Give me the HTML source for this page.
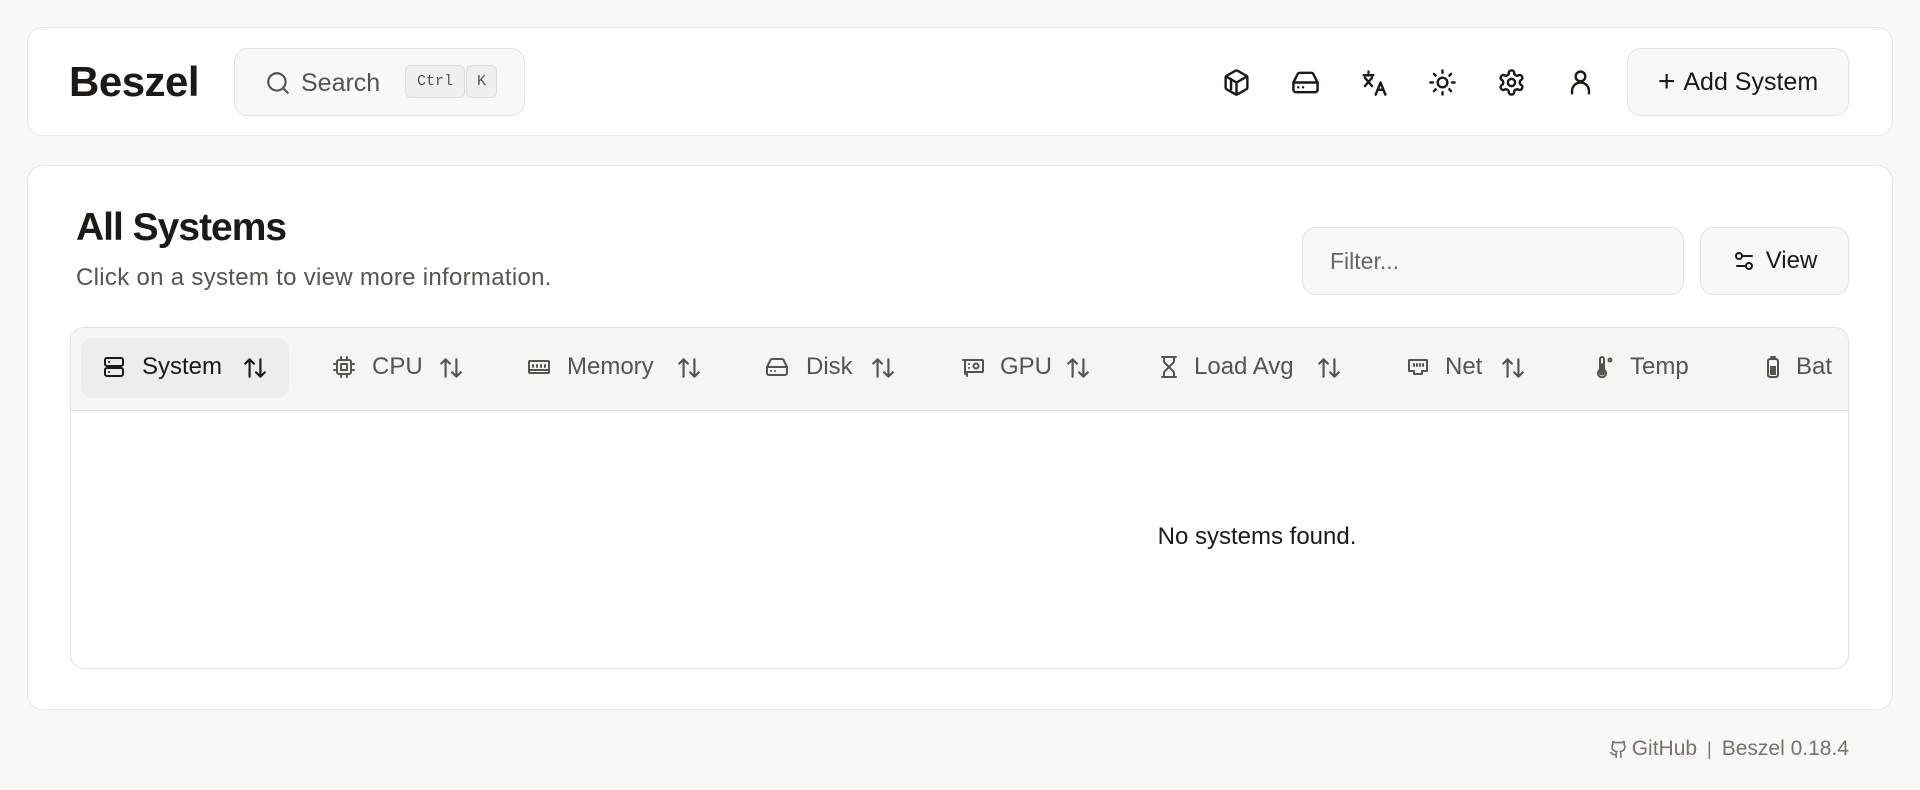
<!DOCTYPE html>
<html><head><meta charset="utf-8"><style>
*{box-sizing:border-box;margin:0;padding:0}
body{width:1920px;height:790px;background:#f8f8f7;font-family:"Liberation Sans",sans-serif;color:#1c1917;position:relative;overflow:hidden}
.card{position:absolute;background:#fff;border:1px solid #e9e7e5;border-radius:16px}
.abs{position:absolute}
svg.i{fill:none;stroke:currentColor;stroke-width:2;stroke-linecap:round;stroke-linejoin:round}
.btn{position:absolute;border:1px solid #e4e2df;background:#f8f8f7;border-radius:14px;display:flex;align-items:center;justify-content:center}
.th{position:absolute;top:367px;transform:translateY(-50%);display:flex;align-items:center;font-size:24px;color:#57534e}
.th svg{width:24px;height:24px}
</style></head><body>
<div class="card" style="left:27px;top:27px;width:1866px;height:109px"></div>
<div class="abs" style="left:69px;top:60px;font-size:42px;font-weight:bold;letter-spacing:-0.5px;line-height:44px">Beszel</div>
<div class="btn" style="left:234px;top:48px;width:291px;height:68px;justify-content:flex-start">
 <svg class="i" style="position:absolute;left:30px;top:21px;width:26px;height:26px;color:#57534e" viewBox="0 0 24 24"><circle cx="11" cy="11" r="8"/><path d="m21 21-4.3-4.3"/></svg>
 <span style="position:absolute;left:66px;top:20px;font-size:25px;color:#57534e">Search</span>
 <span style="position:absolute;left:170px;top:16px;width:60px;height:33px;border:1px solid #e0ddda;background:#f1f0ee;border-radius:6px;font-family:'Liberation Mono',monospace;font-size:15px;color:#57534e;display:flex;align-items:center;justify-content:center">Ctrl</span>
 <span style="position:absolute;left:231px;top:16px;width:31px;height:33px;border:1px solid #e0ddda;background:#f1f0ee;border-radius:6px;font-family:'Liberation Mono',monospace;font-size:15px;color:#57534e;display:flex;align-items:center;justify-content:center">K</span>
</div>
<!-- header icons -->
<svg class="i abs" style="left:1222px;top:68px;width:29px;height:29px" viewBox="0 0 24 24"><path d="M21 8a2 2 0 0 0-1-1.7l-7-4a2 2 0 0 0-2 0l-7 4A2 2 0 0 0 3 8v8a2 2 0 0 0 1 1.7l7 4a2 2 0 0 0 2 0l7-4a2 2 0 0 0 1-1.7Z"/><path d="m3.3 7 8.7 5 8.7-5"/><path d="M12 22V12"/><path d="M7.5 9.5v8"/></svg>
<svg class="i abs" style="left:1291px;top:68px;width:29px;height:29px" viewBox="0 0 24 24"><path d="M22 12H2"/><path d="M5.45 5.11 2 12v6a2 2 0 0 0 2 2h16a2 2 0 0 0 2-2v-6l-3.45-6.89A2 2 0 0 0 16.76 4H7.24a2 2 0 0 0-1.79 1.11z"/><path d="M6 16h.01M10 16h.01"/></svg>
<svg class="i abs" style="left:1360px;top:68px;width:29px;height:29px" viewBox="0 0 24 24"><path d="M7 3v1M3 6h8M4 8l6 7M10 8l-6 7"/><path d="M13 22l4-10 4 10M14.5 18h5"/></svg>
<svg class="i abs" style="left:1428px;top:68px;width:29px;height:29px" viewBox="0 0 24 24"><circle cx="12" cy="12" r="4"/><path d="M12 2v2M12 20v2M4.93 4.93l1.41 1.41M17.66 17.66l1.41 1.41M2 12h2M20 12h2M6.34 17.66l-1.41 1.41M19.07 4.93l-1.41 1.41"/></svg>
<svg class="i abs" style="left:1497px;top:68px;width:29px;height:29px" viewBox="0 0 24 24"><path d="M12.22 2h-.44a2 2 0 0 0-2 2v.18a2 2 0 0 1-1 1.73l-.43.25a2 2 0 0 1-2 0l-.15-.08a2 2 0 0 0-2.73.73l-.22.38a2 2 0 0 0 .73 2.730l.15.1a2 2 0 0 1 1 1.72v.51a2 2 0 0 1-1 1.74l-.15.09a2 2 0 0 0-.73 2.73l.22.38a2 2 0 0 0 2.73.73l.15-.08a2 2 0 0 1 2 0l.43.25a2 2 0 0 1 1 1.73V20a2 2 0 0 0 2 2h.44a2 2 0 0 0 2-2v-.18a2 2 0 0 1 1-1.73l.43-.25a2 2 0 0 1 2 0l.15.08a2 2 0 0 0 2.73-.73l.22-.39a2 2 0 0 0-.73-2.73l-.15-.08a2 2 0 0 1-1-1.74v-.5a2 2 0 0 1 1-1.74l.15-.09a2 2 0 0 0 .73-2.73l-.22-.38a2 2 0 0 0-2.73-.73l-.15.08a2 2 0 0 1-2 0l-.43-.25a2 2 0 0 1-1-1.73V4a2 2 0 0 0-2-2z"/><circle cx="12" cy="12" r="3"/></svg>
<svg class="i abs" style="left:1566px;top:68px;width:29px;height:29px" viewBox="0 0 24 24"><circle cx="12" cy="7" r="4"/><path d="M5 21v-2a6 6 0 0 1 14 0v2"/></svg>
<div class="btn" style="left:1627px;top:48px;width:222px;height:68px;font-size:25px;color:#1c1917"><span style="font-size:30px;margin-right:8px;line-height:1">+</span>Add System</div>

<div class="card" style="left:27px;top:165px;width:1866px;height:545px"></div>
<div class="abs" style="left:76px;top:206px;font-size:39px;font-weight:bold;letter-spacing:-1px">All Systems</div>
<div class="abs" style="left:76px;top:264px;font-size:24px;letter-spacing:0.3px;color:#57534e">Click on a system to view more information.</div>
<div class="btn" style="left:1302px;top:227px;width:382px;height:68px;justify-content:flex-start;padding-left:27px;font-size:23px;color:#6b6561">Filter...</div>
<div class="btn" style="left:1700px;top:227px;width:149px;height:68px;font-size:24px;color:#1c1917">
 <svg class="i" style="width:24px;height:24px;margin-right:10px" viewBox="0 0 24 24"><path d="M20 7h-9M14 17H5"/><circle cx="17" cy="17" r="3"/><circle cx="7" cy="7" r="3"/></svg>View</div>

<div class="abs" style="left:70px;top:327px;width:1779px;height:342px;border:1px solid #e4e2df;border-radius:14px;overflow:hidden;background:#fff">
 <div style="height:83px;background:#f5f5f4;border-bottom:1px solid #e4e2df"></div>
</div>
<div class="abs" style="left:81px;top:338px;width:208px;height:60px;background:#efecea;border-radius:12px"></div>
<div class="th" style="left:102px;color:#1c1917"><svg class="i" viewBox="0 0 24 24"><rect x="3" y="3" width="18" height="8" rx="2"/><rect x="3" y="13" width="18" height="8" rx="2"/><path d="M7 7h.01M7 17h.01"/></svg><span style="margin-left:16px">System</span></div>
<div class="th" style="left:332px"><svg class="i" viewBox="0 0 24 24"><rect x="5" y="5" width="14" height="14" rx="2"/><rect x="9" y="9" width="6" height="6"/><path d="M9 2v3M15 2v3M9 19v3M15 19v3M2 9h3M2 15h3M19 9h3M19 15h3"/></svg><span style="margin-left:16px">CPU</span></div>
<div class="th" style="left:527px"><svg class="i" viewBox="0 0 24 24"><rect x="2" y="6" width="20" height="12" rx="1"/><path d="M6 10v2M10 10v2M14 10v2M18 10v2M2 15h20"/></svg><span style="margin-left:16px">Memory</span></div>
<div class="th" style="left:765px"><svg class="i" viewBox="0 0 24 24"><path d="M22 12H2"/><path d="M5.45 5.11 2 12v6a2 2 0 0 0 2 2h16a2 2 0 0 0 2-2v-6l-3.45-6.89A2 2 0 0 0 16.760 4H7.24a2 2 0 0 0-1.79 1.11z"/><path d="M6 16h.01M10 16h.01"/></svg><span style="margin-left:17px">Disk</span></div>
<div class="th" style="left:961px"><svg class="i" viewBox="0 0 24 24"><path d="M2 5h2v14"/><rect x="4" y="5" width="18" height="12" rx="1"/><circle cx="15" cy="11" r="2.5"/><path d="M8 9h.01M8 13h.01M6 21v-4"/></svg><span style="margin-left:15px">GPU</span></div>
<div class="th" style="left:1157px"><svg class="i" viewBox="0 0 24 24"><path d="M5 22h14M5 2h14M17 22v-4.17a2 2 0 0 0-.59-1.42L12 12l-4.41 4.41A2 2 0 0 0 7 17.83V22M7 2v4.17a2 2 0 0 0 .59 1.42L12 12l4.41-4.41A2 2 0 0 0 17 6.17V2"/></svg><span style="margin-left:13px">Load Avg</span></div>
<div class="th" style="left:1406px"><svg class="i" viewBox="0 0 24 24"><path d="M3 5h18v11h-5v3H8v-3H3z"/><path d="M8 9v2M11 9v2M14 9v2M17 9v2"/></svg><span style="margin-left:15px">Net</span></div>
<div class="th" style="left:1593px"><svg class="i" viewBox="0 0 24 24"><path d="M11 14.76V4a2 2 0 0 0-4 0v10.76a4 4 0 1 0 4 0Z"/><circle cx="9" cy="17.5" r="2" fill="#57534e"/><path d="M9 17V9"/><circle cx="17" cy="5" r="1.5"/></svg><span style="margin-left:13px">Temp</span></div>
<div class="th" style="left:1761px"><svg class="i" viewBox="0 0 24 24"><rect x="7" y="4" width="10" height="18" rx="2"/><path d="M10 2h4"/><rect x="9" y="11" width="6" height="9" fill="#57534e" stroke="none"/></svg><span style="margin-left:11px">Bat</span></div>
<!-- sort arrows -->
<svg class="i abs" style="left:242px;top:355px;width:26px;height:26px;color:#1c1917" viewBox="0 0 24 24"><path d="M7 20V4M3 8l4-4 4 4M17 4v16M13 16l4 4 4-4"/></svg>
<svg class="i abs" style="left:438px;top:355px;width:26px;height:26px;color:#57534e" viewBox="0 0 24 24"><path d="M7 20V4M3 8l4-4 4 4M17 4v16M13 16l4 4 4-4"/></svg>
<svg class="i abs" style="left:676px;top:355px;width:26px;height:26px;color:#57534e" viewBox="0 0 24 24"><path d="M7 20V4M3 8l4-4 4 4M17 4v16M13 16l4 4 4-4"/></svg>
<svg class="i abs" style="left:870px;top:355px;width:26px;height:26px;color:#57534e" viewBox="0 0 24 24"><path d="M7 20V4M3 8l4-4 4 4M17 4v16M13 16l4 4 4-4"/></svg>
<svg class="i abs" style="left:1065px;top:355px;width:26px;height:26px;color:#57534e" viewBox="0 0 24 24"><path d="M7 20V4M3 8l4-4 4 4M17 4v16M13 16l4 4 4-4"/></svg>
<svg class="i abs" style="left:1316px;top:355px;width:26px;height:26px;color:#57534e" viewBox="0 0 24 24"><path d="M7 20V4M3 8l4-4 4 4M17 4v16M13 16l4 4 4-4"/></svg>
<svg class="i abs" style="left:1500px;top:355px;width:26px;height:26px;color:#57534e" viewBox="0 0 24 24"><path d="M7 20V4M3 8l4-4 4 4M17 4v16M13 16l4 4 4-4"/></svg>

<div class="abs" style="left:1057px;top:523px;width:400px;text-align:center;font-size:24px;color:#1c1917">No systems found.</div>

<div class="abs" style="right:71px;top:737px;display:flex;align-items:center;font-size:21px;color:#78716c">
 <svg class="i" style="width:19px;height:19px;margin-right:4px" viewBox="0 0 24 24"><path d="M15 22v-4a4.8 4.8 0 0 0-1-3.5c3 0 6-2 6-5.5.08-1.25-.27-2.48-1-3.5.28-1.15.28-2.35 0-3.5 0 0-1 0-3 1.5-2.64-.5-5.36-.5-8 0C6 2 5 2 5 2c-.3 1.15-.3 2.35 0 3.5A5.4 5.4 0 0 0 4 9c0 3.5 3 5.5 6 5.5-.39.49-.68 1.050-.85 1.65-.17.6-.22 1.23-.15 1.85v4"/><path d="M9 18c-4.51 2-5-2-7-2"/></svg>
 GitHub<span style="margin:0 10px;font-size:18px">|</span>Beszel 0.18.4</div>
</body></html>
